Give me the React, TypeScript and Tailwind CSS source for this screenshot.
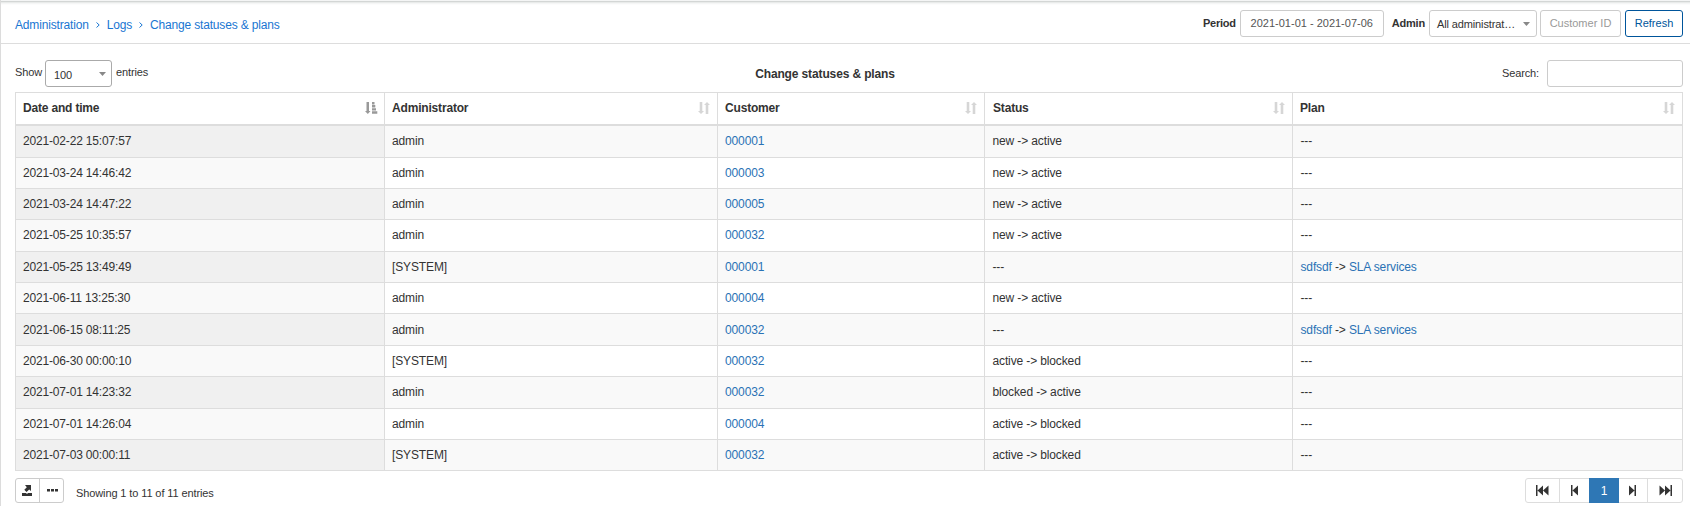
import React from "react";

const rows: string[][] = [
  ["2021-02-22 15:07:57", "admin", "000001", "new -> active", "---"],
  ["2021-03-24 14:46:42", "admin", "000003", "new -> active", "---"],
  ["2021-03-24 14:47:22", "admin", "000005", "new -> active", "---"],
  ["2021-05-25 10:35:57", "admin", "000032", "new -> active", "---"],
  ["2021-05-25 13:49:49", "[SYSTEM]", "000001", "---", "sdfsdf|SLA services"],
  ["2021-06-11 13:25:30", "admin", "000004", "new -> active", "---"],
  ["2021-06-15 08:11:25", "admin", "000032", "---", "sdfsdf|SLA services"],
  ["2021-06-30 00:00:10", "[SYSTEM]", "000032", "active -> blocked", "---"],
  ["2021-07-01 14:23:32", "admin", "000032", "blocked -> active", "---"],
  ["2021-07-01 14:26:04", "admin", "000004", "active -> blocked", "---"],
  ["2021-07-03 00:00:11", "[SYSTEM]", "000032", "active -> blocked", "---"],
];

const heights = ["h-8", "h-[31px]", "h-[31px]", "h-8", "h-[31px]", "h-[31px]", "h-8", "h-[31px]", "h-8", "h-[31px]", "h-[31px]"];
const cols = "grid grid-cols-[369px_333px_267px_308px_390px]";
const heads = ["Date and time", "Administrator", "Customer", "Status", "Plan"];

const SortBoth = () => (
  <svg width="12" height="14" viewBox="0 0 12 14" fill="#d6d6d6" className="mr-[7px] mt-[8px]">
    <path d="M1.700 1h2.600v9H6L3 13 0 10h1.700zM7.700 13h2.600V4H12L9 1 6 4h1.700z" />
  </svg>
);
const SortAsc = () => (
  <svg width="13" height="14" viewBox="0 0 13 14" fill="#999" className="mr-[6px] mt-[8px]">
    <path d="M1.500 1h2.500v9h1.500L2.800 13 0 10h1.500zM7 1h2.500v2.500H7zM7 4h3.300v2.500H7zM7 7.200h4v2.300H7zM7 10.200h5.300v2.500H7z" />
  </svg>
);
const Caret = ({ className }: { className: string }) => (
  <svg width="7" height="4" viewBox="0 0 7 4" fill="#888" className={className}>
    <path d="M0 0h7L3.500 4z" />
  </svg>
);
const Chevron = () => (
  <svg width="4" height="7" viewBox="0 0 4 7" fill="none" stroke="#1976d2" strokeWidth="1">
    <path d="M.5 .5 3.200 3 .5 5.500" />
  </svg>
);

export default function App() {
  return (
    <div className="h-[506px] w-[1690px] overflow-hidden border-l border-[#dcdcdc] bg-white font-['Liberation_Sans',Arial,sans-serif] text-[12px] leading-4 tracking-[-0.13px] text-[#333]">
      <div className="h-[5px] bg-[linear-gradient(#f4f5f5_0_1px,#d3d6d5_1px_2px,#e9ebea_2px_3px,#f5f6f6_3px_4px,#fcfcfc_4px_5px)]" />
      <header className="flex h-[39px] items-start justify-between border-b border-[#dddddd] pr-[7px]">
        <nav className="flex items-center gap-[7px] pl-[14px] pt-3 tracking-[-0.17px] text-[#1976d2]">
          <a>Administration</a>
          <Chevron />
          <a>Logs</a>
          <Chevron />
          <a>Change statuses &amp; plans</a>
        </nav>
        <div className="flex h-[27px] translate-y-[5px] items-center text-[11px]">
          <b className="mr-1 -mt-px tracking-[-0.25px]">Period</b>
          <div className="flex h-full w-36 items-center justify-center rounded-[3px] border border-[#ccc] pb-px tracking-normal text-[#555]">2021-01-01 - 2021-07-06</div>
          <b className="ml-2 mr-1 -mt-px tracking-[-0.2px]">Admin</b>
          <div className="flex h-full w-[108px] items-center rounded-[3px] border border-[#ccc] pl-[7px] pr-[6px] pt-px">
            <span>All administrat…</span>
            <Caret className="ml-auto" />
          </div>
          <div className="ml-[3px] flex h-full w-[81px] items-center justify-center rounded-[3px] border border-[#ccc] pb-px tracking-normal text-[#999]">Customer ID</div>
          <button className="ml-1 h-full w-[58px] rounded-[3px] border border-[#00559b] pb-px tracking-normal text-[#00559b]">Refresh</button>
        </div>
      </header>
      <div className="grid h-12 grid-cols-[620px_1fr_620px] pl-[14px] pr-[7px] pt-4 text-[11px]">
        <div className="flex h-[27px] items-center">
          <span className="-mt-[3px]">Show</span>
          <div className="ml-[3px] mr-[4px] flex h-full w-[67px] items-center rounded-[3px] border border-[#aaa] pl-2 pr-[5px]">
            <span className="pt-0.5">100</span>
            <Caret className="ml-auto" />
          </div>
          <span className="-mt-[3px]">entries</span>
        </div>
        <b className="-translate-x-6 pt-[6px] text-center text-[12px]">Change statuses &amp; plans</b>
        <div className="flex h-[27px] items-center justify-end">
          <span className="-mt-px">Search:</span>
          <div className="ml-2 h-full w-[136px] rounded-[3px] border border-[#ccc]" />
        </div>
      </div>
      <main className="ml-[14px] w-[1668px] border-l border-t border-[#ddd]">
        <div className={`${cols} h-[33px] border-b-2 border-[#ddd] font-bold`}>
          {heads.map((h, i) => (
            <div key={h} className={`flex items-start justify-between border-r border-[#ddd] ${i === 3 ? "pl-2" : "pl-[7px]"}`}>
              <span className="pt-[7px] tracking-[-0.18px]">{h}</span>
              {i === 0 ? <SortAsc /> : <SortBoth />}
            </div>
          ))}
        </div>
        {rows.map((r, i) => (
          <div key={i} className={`${cols} ${heights[i]} border-b border-[#ddd] ${i % 2 ? "bg-white" : "bg-[#f9f9f9]"}`}>
            {r.map((c, j) => (
              <div
                key={j}
                className={`border-r border-[#ddd] ${j > 2 ? "pl-[7.5px]" : "pl-[7px]"} ${i === 6 ? "pt-2" : "pt-[7px]"} ${j === 0 ? (i % 2 ? "bg-[#f9f9f9] tracking-[-0.17px]" : "bg-[#f0f0f0] tracking-[-0.17px]") : ""} ${j === 2 ? "text-[#2a72b5]" : ""}`}
              >
                {c.includes("|") ? (
                  <span>
                    <a className="text-[#2a72b5]">{c.split("|")[0]}</a> -&gt; <a className="text-[#2a72b5]">{c.split("|")[1]}</a>
                  </span>
                ) : (
                  c
                )}
              </div>
            ))}
          </div>
        ))}
      </main>
      <footer className="flex justify-between pl-[14px] pr-[7px] pt-[7px]">
        <div className="flex">
          <div className="flex h-[25px] w-[49px] rounded-[3px] border border-[#ccc]">
            <div className="flex w-6 items-center justify-center border-r border-[#ccc] pr-px">
              <svg width="10" height="11" viewBox="0 0 10 11" fill="#333">
                <path d="M3 0h6v6L7.200 4.400 4.500 7 2.300 4.800 4.800 2.200zM0 8h4l1 1 1-1h4v3H0z" />
              </svg>
            </div>
            <div className="flex flex-1 items-center justify-center pl-px">
              <svg width="11" height="3" viewBox="0 0 11 3" fill="#333">
                <path d="M0 0h3v2.500H0zM4 0h3v2.500H4zM8 0h3v2.500H8z" />
              </svg>
            </div>
          </div>
          <span className="pl-3 pt-[7px] text-[11px] tracking-[-0.11px]">Showing 1 to 11 of 11 entries</span>
        </div>
        <div className="flex h-[25px] rounded-[3px] border border-[#ddd] text-[#333]">
          <div className="flex w-[34px] items-center justify-center border-r border-[#ddd]">
            <svg width="13" height="11" viewBox="0 0 13 11" fill="#333">
              <path d="M0 0h1.500v11H0zM7 .5v10L1.500 5.500zM12.500 .5v10L7 5.500z" />
            </svg>
          </div>
          <div className="flex w-[29px] items-center justify-center">
            <svg width="7" height="11" viewBox="0 0 7 11" fill="#333">
              <path d="M0 0h1.500v11H0zM7 .5v10L1.500 5.500z" />
            </svg>
          </div>
          <div className="-my-px flex w-[30px] items-center justify-center bg-[#2e77b5] text-white">1</div>
          <div className="flex w-[29px] items-center justify-center border-r border-[#ddd] pr-px">
            <svg width="7" height="11" viewBox="0 0 7 11" fill="#333">
              <path d="M5.500 0H7v11H5.500zM0 .5v10L5.500 5.500z" />
            </svg>
          </div>
          <div className="flex w-[34px] items-center justify-center">
            <svg width="13" height="11" viewBox="0 0 13 11" fill="#333">
              <path d="M11.500 0H13v11h-1.500zM.5 .5v10L6 5.500zM6 .5v10L11.500 5.500z" />
            </svg>
          </div>
        </div>
      </footer>
    </div>
  );
}
